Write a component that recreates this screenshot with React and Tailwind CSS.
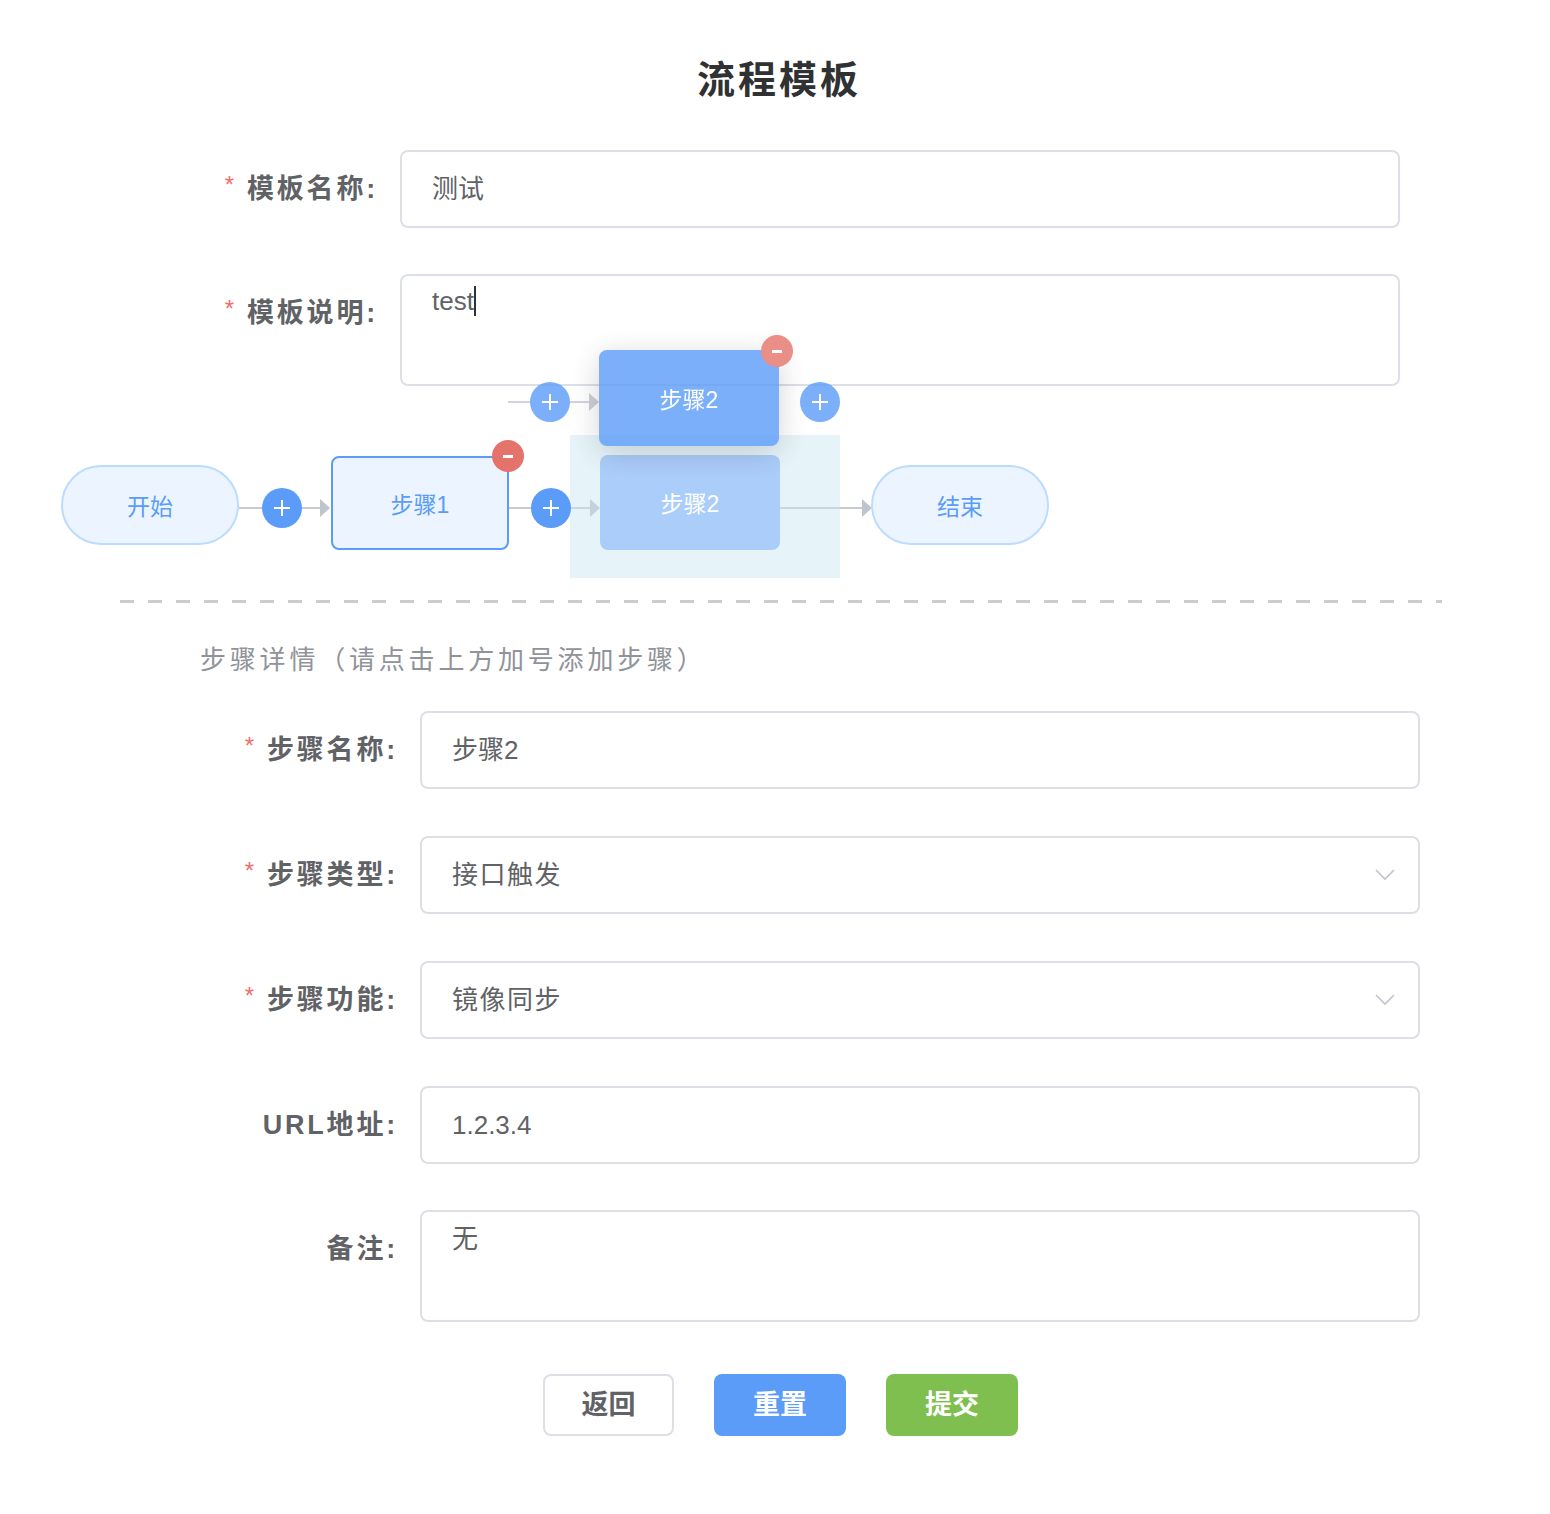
import React from "react";

// flow template editor: top form, drag-and-drop step flow, step detail form

const PlusCircle = ({ className }) => (
  <div className={`absolute w-[40px] h-[40px] rounded-full flex items-center justify-center ${className}`}>
    <svg width="18" height="18" viewBox="0 0 18 18">
      <path d="M9 1v16M1 9h16" stroke="white" strokeWidth="2" />
    </svg>
  </div>
);

const MinusCircle = ({ className }) => (
  <div className={`absolute w-[32px] h-[32px] rounded-full flex items-center justify-center ${className}`}>
    <div className="w-[10px] h-[3px] bg-white"></div>
  </div>
);

const Arrow = ({ className }) => (
  <div className={`absolute w-0 h-0 border-y-[9px] border-y-transparent border-l-[10px] ${className}`}></div>
);

const Line = ({ className }) => <div className={`absolute h-[2px] ${className}`}></div>;

const Label = ({ required, children, width }) => (
  <div
    className={`${width} pr-[22px] h-[78px] flex items-center justify-end text-[27px] font-bold text-[#606266] tracking-[2.8px] shrink-0`}
  >
    {required && <span className="text-[#f56c6c] text-[24px] mr-[10px] -mt-[8px] font-normal">*</span>}
    {children}
  </div>
);

const Chevron = () => (
  <svg width="20" height="12" viewBox="0 0 20 12" className="mr-[23px]">
    <path d="M1 1l9 9 9-9" fill="none" stroke="#c0c4cc" strokeWidth="1.6" />
  </svg>
);

export default function App() {
  return (
    <div className="w-[1550px] h-[1514px] bg-white font-['Liberation_Sans','Noto_Sans_CJK_SC',sans-serif]">
      {/* title */}
      <div className="pt-[56px] h-[104px] text-center pl-[8px] text-[38px] leading-[48px] font-bold tracking-[3px] text-[#303133]">
        流程模板
      </div>

      {/* template form */}
      <div className="flex mt-[46px]">
        <Label required width="w-[400px]">模板名称:</Label>
        <div className="w-[1000px] h-[78px] border-2 border-[#dcdfe6] rounded-[8px] flex items-center pl-[30px] text-[26px] text-[#606266]">
          测试
        </div>
      </div>
      <div className="flex mt-[46px]">
        <Label required width="w-[400px]">模板说明:</Label>
        <div className="w-[1000px] h-[112px] border-2 border-[#dcdfe6] rounded-[8px] pl-[30px] pt-[8px] text-[26px] leading-[34px] text-[#606266] flex items-start">
          <span>test</span>
          <span className="inline-block w-[2px] h-[30px] bg-[#303133] mt-[2px]"></span>
        </div>
      </div>

      {/* flow canvas */}
      <div className="relative h-[214px] w-full">
        <Line className="left-[239px] w-[24px] top-[121px] bg-[#c8cad0]" />
        <Line className="left-[300px] w-[22px] top-[121px] bg-[#c8cad0]" />
        <Arrow className="left-[320px] top-[113px] border-l-[#c0c4cc]" />
        <Line className="left-[509px] w-[24px] top-[121px] bg-[#c8cad0]" />
        <Line className="left-[569px] w-[22px] top-[121px] bg-[#c8cad0]" />
        <Arrow className="left-[590px] top-[113px] border-l-[#c0c4cc]" />
        <Line className="left-[780px] w-[84px] top-[121px] bg-[#c8cad0]" />
        <Arrow className="left-[862px] top-[113px] border-l-[#c0c4cc]" />

        <div className="absolute left-[61px] top-[79px] w-[178px] h-[80px] pt-[4px] rounded-full border-2 border-[#bcdcff] bg-[#ecf5ff] flex items-center justify-center text-[23px] text-[#5a9cf8]">
          开始
        </div>
        <PlusCircle className="left-[262px] top-[102px] bg-[#5a9cf8]" />
        <div className="absolute left-[331px] top-[70px] w-[178px] h-[94px] pt-[4px] rounded-[8px] border-2 border-[#5a9cf8] bg-[#ecf5ff] flex items-center justify-center text-[23px] text-[#5a9cf8]">
          步骤1
        </div>
        <MinusCircle className="left-[492px] top-[54px] bg-[#e4736b]" />

        {/* drop zone */}
        <div className="absolute left-[570px] top-[49px] w-[270px] h-[143px] bg-[rgba(200,230,245,0.45)]"></div>
        <PlusCircle className="left-[531px] top-[102px] bg-[#5a9cf8]" />
        <div className="absolute left-[600px] top-[69px] w-[180px] h-[95px] pt-[4px] rounded-[8px] bg-[#abcdf9] flex items-center justify-center text-[23px] text-white">
          步骤2
        </div>

        <div className="absolute left-[871px] top-[79px] w-[178px] h-[80px] pt-[4px] rounded-full border-2 border-[#bcdcff] bg-[#ecf5ff] flex items-center justify-center text-[23px] text-[#5a9cf8]">
          结束
        </div>

        {/* node being dragged */}
        <div className="absolute inset-0 opacity-80">
          <Line className="left-[508px] w-[24px] top-[15px] bg-[#c8cad0]" />
          <Line className="left-[568px] w-[24px] top-[15px] bg-[#c8cad0]" />
          <Arrow className="left-[589px] top-[7px] border-l-[#c0c4cc]" />
          <PlusCircle className="left-[530px] top-[-4px] bg-[#5a9cf8]" />
          <div className="absolute left-[599px] top-[-36px] w-[180px] h-[96px] pt-[4px] rounded-[8px] bg-[#5a9cf8] shadow-[0_6px_30px_rgba(0,0,0,0.22)] flex items-center justify-center text-[23px] text-white">
            步骤2
          </div>
          <MinusCircle className="left-[761px] top-[-51px] bg-[#e4736b]" />
          <PlusCircle className="left-[800px] top-[-4px] bg-[#5a9cf8]" />
        </div>
      </div>

      {/* dashed divider */}
      <div className="ml-[120px] w-[1322px] h-[3px] bg-[repeating-linear-gradient(to_right,#cccccc_0px,#cccccc_14px,transparent_14px,transparent_28px)]"></div>

      {/* step detail */}
      <div className="mt-[37px] pl-[200px] h-[40px] leading-[40px] text-[26px] tracking-[3.8px] text-[#909399]">
        步骤详情（请点击上方加号添加步骤）
      </div>

      <div className="flex mt-[31px]">
        <Label required width="w-[420px]">步骤名称:</Label>
        <div className="w-[1000px] h-[78px] border-2 border-[#dcdfe6] rounded-[8px] flex items-center pl-[30px] text-[26px] text-[#606266]">
          步骤2
        </div>
      </div>
      <div className="flex mt-[47px]">
        <Label required width="w-[420px]">步骤类型:</Label>
        <div className="w-[1000px] h-[78px] border-2 border-[#dcdfe6] rounded-[8px] flex items-center justify-between pl-[30px] text-[26px] tracking-[1.5px] text-[#606266]">
          <span>接口触发</span>
          <Chevron />
        </div>
      </div>
      <div className="flex mt-[47px]">
        <Label required width="w-[420px]">步骤功能:</Label>
        <div className="w-[1000px] h-[78px] border-2 border-[#dcdfe6] rounded-[8px] flex items-center justify-between pl-[30px] text-[26px] tracking-[1.5px] text-[#606266]">
          <span>镜像同步</span>
          <Chevron />
        </div>
      </div>
      <div className="flex mt-[47px]">
        <Label width="w-[420px]">URL地址:</Label>
        <div className="w-[1000px] h-[78px] border-2 border-[#dcdfe6] rounded-[8px] flex items-center pl-[30px] text-[26px] text-[#606266]">
          1.2.3.4
        </div>
      </div>
      <div className="flex mt-[46px]">
        <Label width="w-[420px]">备注:</Label>
        <div className="w-[1000px] h-[112px] border-2 border-[#dcdfe6] rounded-[8px] pl-[30px] pt-[10px] text-[26px] leading-[34px] text-[#606266]">
          无
        </div>
      </div>

      {/* actions */}
      <div className="flex justify-center gap-[40px] mt-[52px] pl-[11px]">
        <button className="w-[131px] h-[62px] rounded-[8px] border-2 border-[#dcdfe6] bg-white text-[27px] font-bold text-[#606266]">
          返回
        </button>
        <button className="w-[132px] h-[62px] rounded-[8px] bg-[#5a9cf8] text-[27px] font-bold text-white">
          重置
        </button>
        <button className="w-[132px] h-[62px] rounded-[8px] bg-[#7fbf4f] text-[27px] font-bold text-white">
          提交
        </button>
      </div>
    </div>
  );
}
